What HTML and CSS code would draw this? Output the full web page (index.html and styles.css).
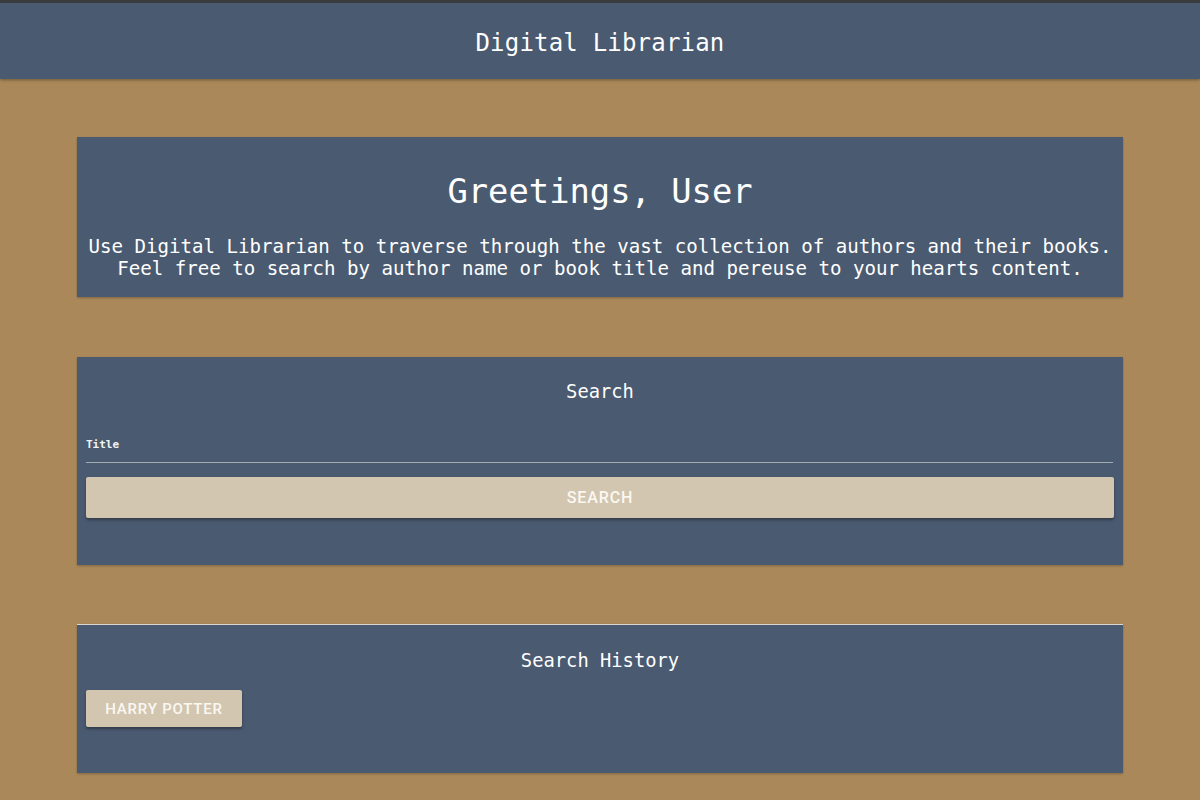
FILE: index.html
```html
<!DOCTYPE html>
<html lang="en">
<head>
<meta charset="utf-8">
<title>Digital Librarian</title>
<link rel="stylesheet" href="styles.css">
</head>
<body>
<header class="topbar">
  <h1 class="brand">Digital Librarian</h1>
</header>
<main class="main">
  <section class="card greet">
    <h2 class="greet-title">Greetings, User</h2>
    <p class="greet-text">Use Digital Librarian to traverse through the vast collection of authors and their books.<br>Feel free to search by author name or book title and pereuse to your hearts content.</p>
  </section>
  <section class="card search">
    <h3 class="card-title">Search</h3>
    <label class="field">
      <span class="field-label">Title</span>
      <input class="field-input" type="text">
    </label>
    <button class="btn btn-block">Search</button>
  </section>
  <section class="card history">
    <h3 class="card-title">Search History</h3>
    <div class="history-list">
      <button class="btn">Harry Potter</button>
    </div>
  </section>
</main>
</body>
</html>
```
FILE: styles.css
```css
html, body {
  margin: 0;
  padding: 0;
}
body {
  background: #aa8859;
  font-family: "DejaVu Sans Mono", "Liberation Mono", monospace;
  color: #ffffff;
  min-height: 800px;
}
.topbar {
  background: #4a5a70;
  border-top: 3px solid #3a3b3d;
  height: 76px;
  box-sizing: border-box;
  height: 79px;
  padding-top: 3px;
  display: flex;
  align-items: center;
  justify-content: center;
  box-shadow: 0 1px 3px rgba(0,0,0,0.35);
}
.brand {
  margin: 0;
  font-size: 24px;
  font-weight: normal;
  line-height: 28px;
  letter-spacing: 0.2px;
}
.main {
  width: 1046px;
  margin: 0 auto;
  padding-top: 58px;
  display: flex;
  flex-direction: column;
}
.card {
  background: #4a5a70;
  box-shadow: 0 1px 2px rgba(0,0,0,0.25);
  display: flex;
  flex-direction: column;
  padding: 0 9px;
}
.greet {
  height: 160px;
  box-sizing: border-box;
  padding-top: 35px;
  align-items: center;
}
.greet-title {
  margin: 0;
  font-size: 33.8px;
  line-height: 40px;
  font-weight: normal;
}
.greet-text {
  margin: 24px 0 0;
  font-size: 19.1px;
  line-height: 22px;
  text-align: center;
}
.search {
  margin-top: 60px;
  height: 208px;
  box-sizing: border-box;
  padding-top: 23px;
}
.card-title {
  margin: 0;
  font-size: 18.8px;
  line-height: 24px;
  font-weight: normal;
  text-align: center;
}
.field {
  display: flex;
  flex-direction: column;
  margin-top: 34px;
  border-bottom: 1px solid #a4aab3;
  margin-right: 1px;
}
.field-label {
  font-size: 11px;
  line-height: 14px;
  font-weight: bold;
  color: #f3f3f3;
}
.field-input {
  height: 10px;
  border: 0;
  background: transparent;
  padding: 0;
  outline: none;
}
.btn {
  background: #d2c6b0;
  color: #fbf8f2;
  border: 0;
  border-radius: 2px;
  font-family: Roboto, "Liberation Sans", sans-serif;
  font-weight: 500;
  text-transform: uppercase;
  font-size: 16px;
  letter-spacing: 0.9px;
  box-shadow: 0 2px 3px rgba(0,0,0,0.35);
  cursor: pointer;
}
.btn-block {
  margin-top: 14px;
  height: 41px;
  width: 100%;
}
.history {
  margin-top: 59px;
  height: 149px;
  box-sizing: border-box;
  border-top: 1px solid #dcd8d0;
  padding-top: 24px;
}
.history-list {
  margin-top: 17px;
  display: flex;
}
.history-list .btn {
  height: 37px;
  width: 156px;
  font-size: 15px;
  letter-spacing: 0.8px;
}
```
